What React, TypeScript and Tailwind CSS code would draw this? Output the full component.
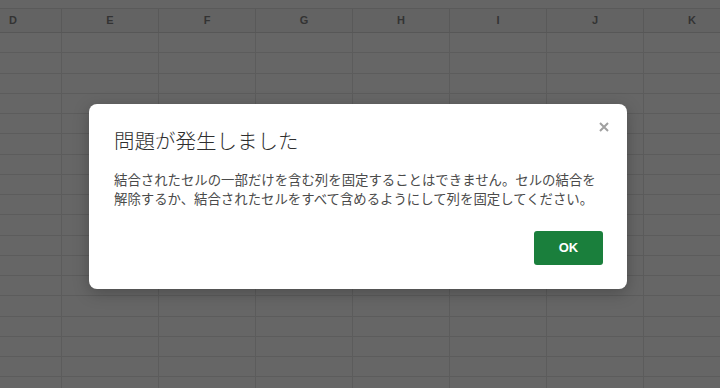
import React from "react";

const columns = ["D", "E", "F", "G", "H", "I", "J", "K"];
const rows = Array.from({ length: 18 }, (_, i) => i);

export default function App() {
  return (
    <div className="relative h-[388px] w-[720px] overflow-hidden bg-[#666666] font-['Noto_Sans_CJK_JP',sans-serif]">
      {/* sheet behind the scrim */}
      <div className="h-[9px] border-b border-[#5a5a5a] bg-[#656565]" />
      <div className="ml-[-35px] flex h-[24px] border-b border-[#575757] bg-[#636363]">
        {columns.map((col) => (
          <div
            key={col}
            className="flex w-[97px] shrink-0 items-center justify-center border-r border-[#595959] font-['Liberation_Sans',sans-serif] text-[11px] font-bold text-[#333333]"
          >
            {col}
          </div>
        ))}
      </div>
      {rows.map((row) => (
        <div key={row} className="ml-[-35px] flex h-[20.25px] border-b border-[#5c5c5c]">
          {columns.map((col) => (
            <div key={col} className="w-[97px] shrink-0 border-r border-[#5c5c5c]" />
          ))}
        </div>
      ))}

      {/* dialog */}
      <div className="absolute left-[89px] top-[104px] flex h-[185px] w-[538px] flex-col rounded-[8px] bg-white pl-[25px] pr-[24px] shadow-[0_4px_16px_rgba(0,0,0,0.25)]">
        <button className="absolute right-[18px] top-[18px] leading-none">
          <svg width="10" height="10" viewBox="0 0 10 10">
            <path d="M1 1L9 9M9 1L1 9" stroke="#a0a0a0" strokeWidth="2" />
          </svg>
        </button>
        <h1 className="mt-[22px] text-[20.5px] font-light leading-[28px] text-[#2e2e2e]">
          問題が発生しました
        </h1>
        <div className="mt-[16px] text-[13.4px] text-[#4a4a4a]">
          <p className="h-[19px] leading-[19px]">
            結合されたセルの一部だけを含む列を固定することはできません。セルの結合を
          </p>
          <p className="h-[19px] leading-[19px]">
            解除するか、結合されたセルをすべて含めるようにして列を固定してください。
          </p>
        </div>
        <div className="mt-auto mb-[24px] flex justify-end">
          <button className="h-[34px] w-[69px] rounded-[3px] bg-[#1a7f3c] font-['Liberation_Sans',sans-serif] text-[13px] font-bold text-white">
            OK
          </button>
        </div>
      </div>
    </div>
  );
}
